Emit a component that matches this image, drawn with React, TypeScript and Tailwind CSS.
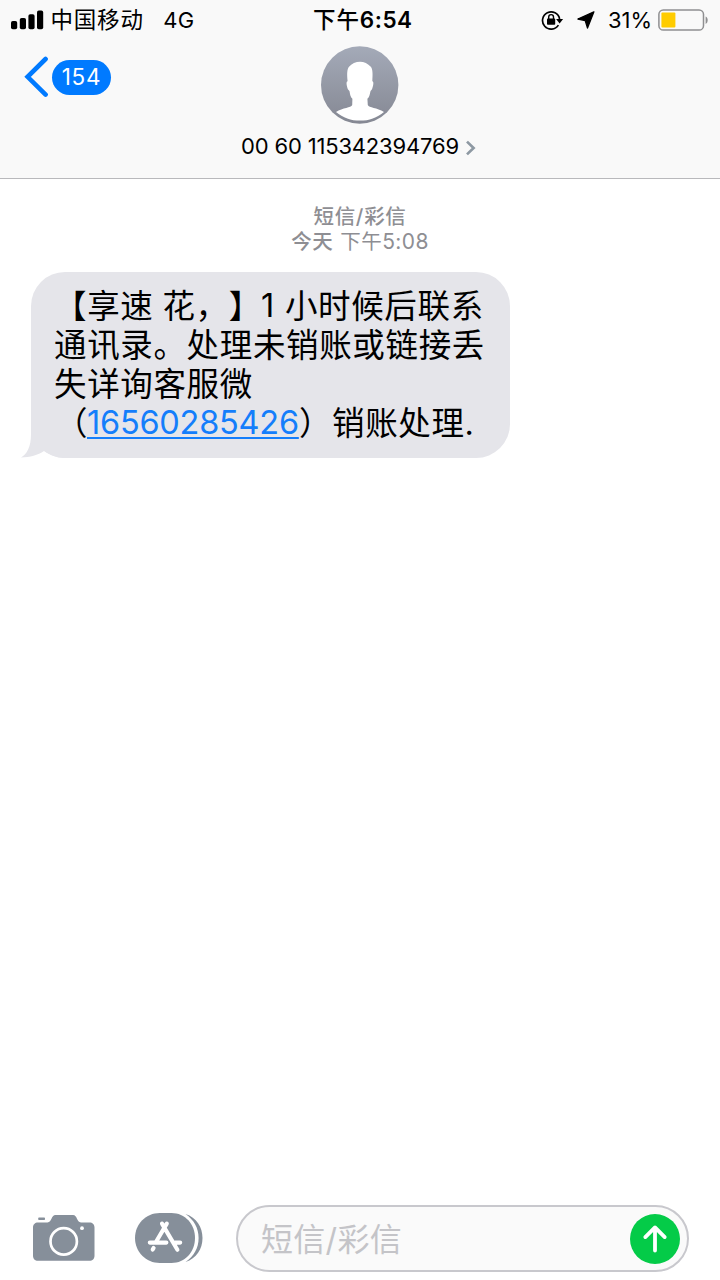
import React from "react";

const FONT = "font-['Inter','Noto_Sans_CJK_SC',sans-serif] [text-spacing-trim:space-all]";

function SignalBars() {
  return (
    <svg width="33" height="20" viewBox="0 0 33 20" className="-ml-[0.5px] -mt-px shrink-0">
      <rect x="0" y="11" width="6.2" height="8.2" rx="1.8" />
      <rect x="8.8" y="8" width="6.2" height="11.2" rx="1.8" />
      <rect x="17.4" y="4.2" width="6.2" height="15" rx="1.8" />
      <rect x="26" y="0.6" width="6.2" height="18.6" rx="1.8" />
    </svg>
  );
}

function RotationLock() {
  return (
    <svg width="23" height="20" viewBox="0 0 23 20" fill="none" className="-mt-px shrink-0">
      <path d="M17.4 15.1A8.6 8.6 0 1 1 18.6 9" stroke="#000" strokeWidth="1.7" />
      <path d="M15.1 9h7L18.6 13.6z" fill="#000" />
      <rect x="6" y="8.6" width="8.2" height="6.2" rx="0.8" fill="#000" />
      <path d="M7.7 9.5V7a2.4 2.4 0 0 1 4.8 0v2.5" stroke="#000" strokeWidth="1.4" />
    </svg>
  );
}

function Battery() {
  return (
    <svg width="51" height="22" viewBox="0 0 51 22" fill="none" className="-mt-px shrink-0">
      <rect x="0.9" y="0.9" width="44.6" height="20.2" rx="4.4" stroke="#8f8f91" strokeWidth="1.5" />
      <rect x="3.4" y="3.4" width="14" height="15.2" rx="1" fill="#ffcc00" />
      <path d="M47.6 7.6c2.8 1.2 2.8 6.2 0 7.4z" fill="#8f8f91" />
    </svg>
  );
}

function StatusBar() {
  return (
    <div className="grid h-10 grid-cols-[300px_1fr_184px] items-center text-black">
      <div className="flex items-center pl-[11.5px]">
        <SignalBars />
        <span className="ml-[6.5px] text-[22.5px] leading-10 tracking-[0.8px]">中国移动</span>
        <span className="ml-[19.5px] text-[22px] leading-10 tracking-[0.4px]">4G</span>
      </div>
      <div className="flex items-center pl-[13px] leading-10">
        <span className="text-[22.5px] font-medium tracking-[0.9px]">下午</span>
        <span className="text-[22.5px] font-semibold tracking-[0.5px]">6:54</span>
      </div>
      <div className="flex items-center pl-[5px]">
        <RotationLock />
        <svg width="20" height="20" viewBox="0 0 20 20" className="ml-[13px] shrink-0">
          <path d="M16.9 1.8 0.9 9l7.3 1.6 2.3 7.5z" stroke="#000" strokeWidth="1.3" strokeLinejoin="round" />
        </svg>
        <span className="ml-[11px] w-[50px] whitespace-nowrap text-[22px] leading-10">31%</span>
        <Battery />
      </div>
    </div>
  );
}

function Avatar() {
  return (
    <svg width="78" height="78" viewBox="0 0 78 78">
      <defs>
        <linearGradient id="avatar" x1="0" y1="0" x2="0" y2="1">
          <stop offset="0" stopColor="#a4aab8" />
          <stop offset="1" stopColor="#858893" />
        </linearGradient>
      </defs>
      <circle cx="38.7" cy="39" r="38.7" fill="url(#avatar)" />
      <path
        d="M39 15.8C43 15.8 47 17.7 49.8 20.8C51.8 23.2 51.8 28 51.3 35.2C53.4 35.4 51.9 41 51 43.2C50.5 44.2 49.8 44 49.4 45.5C48.8 49 48.3 51 46.4 52.8L46.8 59C48 62 56 61.5 63 65.9C56 71.8 48 74.6 39 74.6C30 74.6 22 71.8 15 65.9C22 61.5 30 62 31.2 59L31.4 52.8C29.6 51 29 49 28.6 45.5C28.2 44 27.4 44.2 26.9 43.2C26 41 24.6 35.4 26.6 35.2C25.9 28 26 23.2 28 20.8C30.5 17.7 35 15.8 39 15.8Z"
        fill="#fff"
      />
    </svg>
  );
}

function Header() {
  return (
    <header className="h-[179px] border-b border-[#b9b9bc] bg-[#f9f9f9]">
      <StatusBar />
      <div className="grid grid-cols-[1fr_78px_1fr] items-start">
        <div className="flex items-center pl-[24px] pt-[16px]">
          <svg width="25" height="42" viewBox="0 0 25 42" fill="none">
            <path d="M21.6 3 3.6 20.8 21.6 38.6" stroke="#007aff" strokeWidth="4.6" strokeLinecap="round" strokeLinejoin="miter" />
          </svg>
          <span className="ml-[3px] flex h-[35px] w-[59px] items-center justify-center rounded-full bg-[#007aff] text-[22.5px] tracking-[0.7px] text-white">
            154
          </span>
        </div>
        <div className="pt-[6px]">
          <Avatar />
        </div>
      </div>
      <div className="flex h-[44px] items-center pl-[241px] text-black">
        <span className="w-[218px] whitespace-nowrap text-[22px] tracking-[-0.17px]">00 60 115342394769</span>
        <svg width="12" height="16" viewBox="0 0 12 16" fill="none" className="ml-[6px] mt-[3px]">
          <path d="m2 1.6 6.6 6.4L2 14.4" stroke="#8e99a3" strokeWidth="2.7" />
        </svg>
      </div>
    </header>
  );
}

function MessageBubble() {
  return (
    <div className="relative ml-[31px] mt-[18px] h-[186px] w-[479px] rounded-[34px] bg-[#e5e5ea] pl-[23px] pt-[15px] text-black">
      <svg width="44" height="40" viewBox="0 0 44 40" className="absolute -left-[10px] bottom-0">
        <path d="M10 0V16C10 29 6 36 0 39.4C9 39.4 17 37 23 33C29 37 35 39.4 44 40V0Z" fill="#e5e5ea" />
      </svg>
      <div className="relative whitespace-nowrap text-[32.5px] leading-[39px] tracking-[0.65px]">
        <div className="flex">
          <span>【享速</span>
          <span className="ml-[9px]">花，】</span>
          <span className="-mt-px ml-[-1px] w-[24px]">1</span>
          <span>小时候后联系</span>
        </div>
        <div>通讯录。处理未销账或链接丢</div>
        <div>失详询客服微</div>
        <div className="flex">
          <span className="w-[33px] pl-px">（</span>
          <a className="-mt-px w-[212px] tracking-[-0.24px] text-[#147efb] underline decoration-2 underline-offset-[3px]">
            16560285426
          </a>
          <span className="w-[33px]">）</span>
          <span>销账处理</span>
          <span>.</span>
        </div>
      </div>
    </div>
  );
}

function CameraIcon() {
  return (
    <svg width="62" height="48" viewBox="0 0 62 48" fill="none">
      <rect x="5.2" y="3.6" width="6.8" height="2.4" rx="0.8" fill="#868f9a" />
      <path
        d="M5 8.4H14.5C19 8.4 18 1 22.5 1H40C44.5 1 43.5 8.4 48 8.4H56.5C59.5 8.4 61.5 10.4 61.5 13.4V41.8C61.5 44.8 59.5 46.8 56.5 46.8H5C2 46.8 0 44.8 0 41.8V13.4C0 10.4 2 8.4 5 8.4Z"
        fill="#868f9a"
      />
      <circle cx="30.7" cy="27.4" r="13.2" stroke="#fff" strokeWidth="2.7" />
      <circle cx="49" cy="14.2" r="1.9" fill="#fff" />
    </svg>
  );
}

function AppStoreIcon() {
  return (
    <svg width="68" height="50" viewBox="0 0 68 50" fill="none">
      <path d="M24.8 0H36.5C50 0 60 11 60 25S50 50 36.5 50H24.8C11 50 0 39 0 25S11 0 24.8 0Z" fill="#868f9a" />
      <path d="M50.5 1C61.5 4.5 67.5 14 67.5 25S61.5 45.5 50.5 49C59 43 63.6 35 63.6 25S59 7 50.5 1Z" fill="#868f9a" />
      <g stroke="#fff" strokeWidth="4.1" strokeLinecap="round">
        <path d="M31.8 10.6 20.8 29.2M27 10.6 42.4 36.8M14.8 29.6H31.4M40 29.6H45.2M18.6 35 17.7 36.6" />
      </g>
    </svg>
  );
}

function InputBar() {
  return (
    <footer className="flex h-[76px] items-start pl-[32.5px] pt-[1px]">
      <div className="mt-[9px]">
        <CameraIcon />
      </div>
      <div className="ml-[40.5px] mt-[8px]">
        <AppStoreIcon />
      </div>
      <div className="ml-[33px] flex h-[67px] w-[453px] items-center justify-between rounded-full border-2 border-[#c8c8cd] bg-[#fafafa] pl-[23px] pr-[7.5px]">
        <span className="pt-[2px] text-[32px] leading-[50px] tracking-[0.3px] text-[#c4c4c8]">短信/彩信</span>
        <svg width="50" height="50" viewBox="0 0 50 50" fill="none">
          <circle cx="25" cy="25" r="25" fill="#04cb48" />
          <path d="M25 36.5V13.5M15.3 23.1 25 13.4l9.7 9.7" stroke="#fff" strokeWidth="3.8" strokeLinecap="round" strokeLinejoin="round" />
        </svg>
      </div>
    </footer>
  );
}

export default function App() {
  return (
    <div className={`${FONT} flex h-[1280px] w-[720px] flex-col overflow-hidden bg-white`}>
      <Header />
      <main className="flex-1">
        <div className="pt-[25px] text-center text-[20.5px] leading-[25px] text-[#8e8e93]">
          <div className="font-medium tracking-[0.7px]">短信/彩信</div>
          <div className="flex justify-center">
            <span className="font-medium tracking-[0.5px]">今天</span>
            <span className="ml-[7px] tracking-[0.5px]">下午</span>
            <span className="text-[21px] tracking-[0.4px]">5:08</span>
          </div>
        </div>
        <MessageBubble />
      </main>
      <InputBar />
    </div>
  );
}
